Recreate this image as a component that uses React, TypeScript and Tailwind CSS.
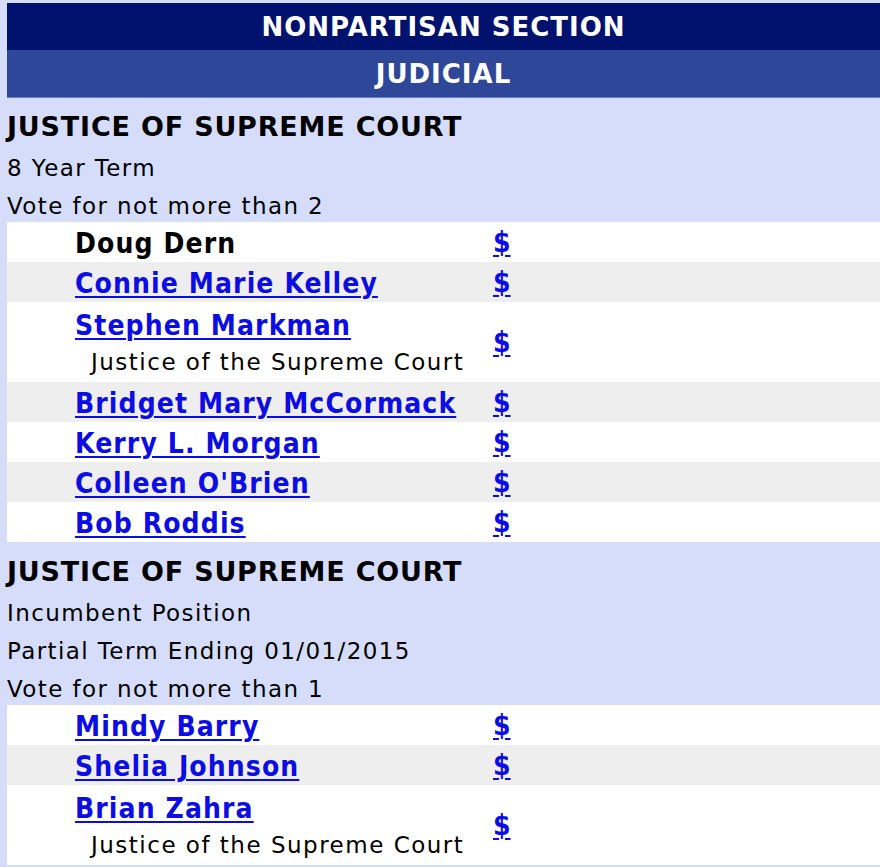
import React from "react";

type Cand = { name: string; link: boolean; desc?: string };

const BASE = { fontFamily: '"DejaVu Sans", Verdana, sans-serif' };
const COND = { fontFamily: '"DejaVu Sans Condensed", "DejaVu Sans", Verdana, sans-serif' };

function SectionHeader({ lines }: { lines: string[] }) {
  return (
    <div className="bg-[#d5ddfb] pt-[6px]">
      <div className="h-[42px] pt-[3px] flex items-center text-[27px] font-bold tracking-[0.8px] text-black leading-none">
        JUSTICE OF SUPREME COURT
      </div>
      {lines.map((l) => (
        <div key={l} className="h-[38px] pt-[6px] flex items-center text-[23px] tracking-[1.4px] text-black leading-none">
          {l}
        </div>
      ))}
    </div>
  );
}

function Row({ c, i }: { c: Cand; i: number }) {
  const bg = i % 2 === 0 ? "bg-white" : "bg-[#eeeeee]";
  return (
    <div className={`${bg} flex items-center ${c.desc ? "h-[80px]" : "h-[40px]"}`}>
      <div className="w-[486px] pl-[68px] flex flex-col justify-center pt-[3px]">
        <span
          style={COND}
          className={`text-[28px] font-bold tracking-[1.1px] leading-[37px] ${
            c.link ? "text-[#0c0ce4] underline decoration-2 underline-offset-[3px]" : "text-black"
          }`}
        >
          {c.name}
        </span>
        {c.desc && (
          <span className="text-[23px] tracking-[1.5px] leading-[38px] text-black pl-[16px] -mt-[1px]">
            {c.desc}
          </span>
        )}
      </div>
      <span
        style={COND}
        className="text-[28px] font-bold text-[#0c0ce4] underline decoration-2 underline-offset-[3px] leading-none pt-[2px]"
      >
        $
      </span>
    </div>
  );
}

export default function App() {
  const first: Cand[] = [
    { name: "Doug Dern", link: false },
    { name: "Connie Marie Kelley", link: true },
    { name: "Stephen Markman", link: true, desc: "Justice of the Supreme Court" },
    { name: "Bridget Mary McCormack", link: true },
    { name: "Kerry L. Morgan", link: true },
    { name: "Colleen O'Brien", link: true },
    { name: "Bob Roddis", link: true },
  ];
  const second: Cand[] = [
    { name: "Mindy Barry", link: true },
    { name: "Shelia Johnson", link: true },
    { name: "Brian Zahra", link: true, desc: "Justice of the Supreme Court" },
  ];
  return (
    <div style={BASE} className="w-[880px] h-[867px] bg-[#d5ddfb] pt-[3px] pl-[7px] pb-[4px] overflow-hidden">
      <div className="h-[47px] bg-[#00126e] text-white font-bold text-[26px] tracking-[1px] flex items-center justify-center pt-[2px]">
        NONPARTISAN SECTION
      </div>
      <div className="h-[48px] bg-[#2f4799] text-white font-bold text-[26px] tracking-[1px] flex items-center justify-center border-b border-[#6b7fc4] pt-[2px]">
        JUDICIAL
      </div>
      <SectionHeader lines={["8 Year Term", "Vote for not more than 2"]} />
      {first.map((c, i) => (
        <Row key={c.name} c={c} i={i} />
      ))}
      <div className="h-px bg-[#d5ddfb]" />
      <SectionHeader
        lines={["Incumbent Position", "Partial Term Ending 01/01/2015", "Vote for not more than 1"]}
      />
      {second.map((c, i) => (
        <Row key={c.name} c={c} i={i} />
      ))}
    </div>
  );
}
